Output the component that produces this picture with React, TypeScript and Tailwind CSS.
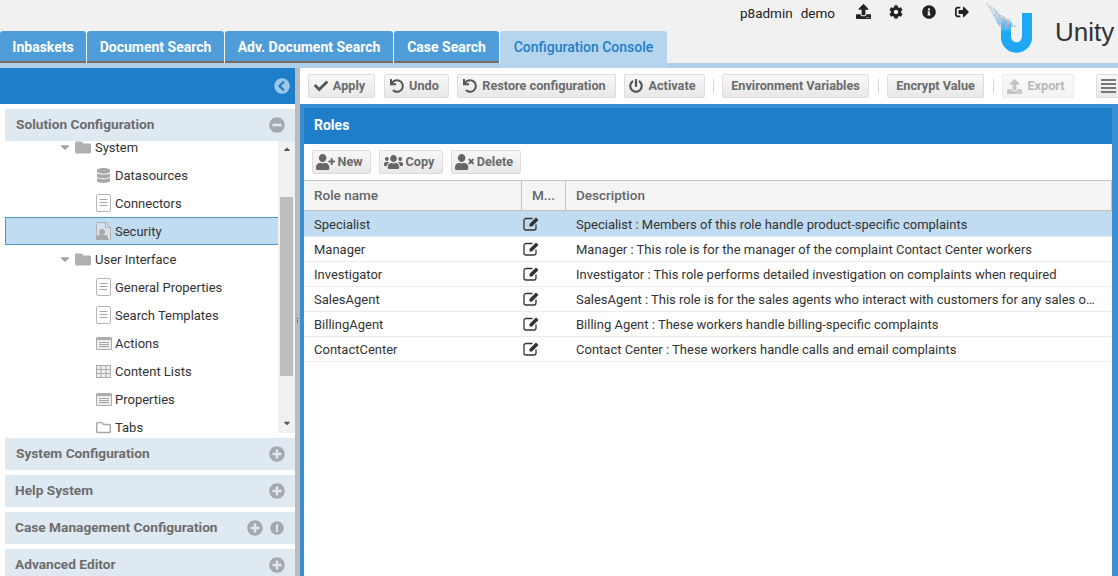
import React from "react";
import { FaCheck, FaUndo, FaPowerOff, FaUpload, FaCog, FaInfoCircle, FaSignOutAlt, FaUserPlus, FaUsers, FaUserTimes, FaChevronCircleLeft, FaPlusCircle, FaMinusCircle, FaExclamationCircle, FaFolder, FaRegFolder, FaDatabase, FaCaretDown, FaCaretUp } from "react-icons/fa";

const Tab = ({ label, w, active }: { label: string; w: string; active?: boolean }) => (
  <div className={active
    ? `${w} h-[37px] bg-[#b5d5ee] text-[#1f7ec9] text-[14px] font-medium flex items-start pt-[6px] justify-center rounded-t-[3px]`
    : `${w} h-[32px] bg-[#4f9dd8] text-white text-[14px] font-bold flex items-start pt-[6px] justify-center border-b-2 border-[#7a6a62] rounded-t-[3px]`}>
    {label}
  </div>
);

const DocIcon = () => (
  <svg width="15" height="18" viewBox="0 0 15 18">
    <rect x="0.5" y="0.5" width="14" height="17" rx="1.5" fill="#fff" stroke="#b5b5b5" />
    <path d="M3.500 5.500h8M3.500 8.500h8M3.500 11.500h8" stroke="#a8a8a8" fill="none" />
  </svg>
);
const SecIcon = () => (
  <svg width="15" height="18" viewBox="0 0 15 18">
    <path d="M.5 1.500a1 1 0 0 1 1-1h8l5 5v11a1 1 0 0 1-1 1h-12a1 1 0 0 1-1-1z" fill="#d6e3ee" stroke="#b0b0b0" />
    <path d="M9.500.5v5h5" fill="none" stroke="#b0b0b0" />
    <circle cx="6" cy="10" r="3" fill="#a8a8a8" />
    <path d="M0 18v-3a2.500 2.500 0 0 1 2.500-2h7a2.500 2.500 0 0 1 2.500 2v3z" fill="#a8a8a8" />
  </svg>
);
const ListIcon = () => (
  <svg width="16" height="13" viewBox="0 0 16 13">
    <rect width="16" height="13" rx="1.500" fill="#ababab" />
    <rect x="1" y="3" width="14" height="9" fill="#eee" />
    <path d="M3 5.500h10M3 7.500h10M3 9.500h10" stroke="#a8a8a8" />
  </svg>
);
const GridIcon = () => (
  <svg width="15" height="13" viewBox="0 0 15 13">
    <rect x=".5" y=".5" width="14" height="12" fill="#eee" stroke="#ababab" />
    <path d="M0 4.500h15M0 8.500h15M5 0v13M10 0v13" stroke="#ababab" fill="none" />
  </svg>
);
const EditIcon = () => (
  <svg width="17" height="15" viewBox="0 0 17 15" className="block">
    <path d="M9.500 2.500H3A2 2 0 0 0 1 4.500V12a2 2 0 0 0 2 2h8a2 2 0 0 0 2-2V8.500" fill="none" stroke="#333" strokeWidth="1.300" />
    <path d="M6.500 8L13 1.500 15.500 4 9 10.500H6.500z" fill="#333" />
  </svg>
);
const MenuIcon = () => (
  <svg width="15" height="14" viewBox="0 0 15 14" className="block">
    <path d="M0 1h15M0 5h15M0 9h15M0 13h15" stroke="#777" strokeWidth="2" />
  </svg>
);

const TreeRow = ({ label, icon, caret, selected, first }: { label: string; icon: React.ReactNode; caret?: boolean; selected?: boolean; first?: boolean }) => (
  <div className={`h-[28px] flex items-center text-[13px] text-[#333] ${first ? "-mt-[8px]" : ""} ${selected ? "bg-[#c1dcf0] border border-[#4b94cc] border-r-0" : ""}`}>
    {caret ? (
      <div className="flex items-center">
        <FaCaretDown className="ml-[53px] mr-[3px] text-[#a3a3a3] text-[14px]" />
        <FaFolder className="text-[#b0b0b0] text-[17px] mr-[4px] w-[16px]" />
      </div>
    ) : (
      <div className={`flex items-center justify-center w-[17px] ${selected ? "ml-[89px]" : "ml-[90px]"} mr-[2px]`}>{icon}</div>
    )}
    <span className={`pt-[2px] ${caret ? "" : "ml-[1px]"}`}>{label}</span>
  </div>
);

const Section = ({ label, minus, warn, mt = "mt-[5px]", pl = "pl-[11px]" }: { label: string; minus?: boolean; warn?: boolean; mt?: string; pl?: string }) => (
  <div className={`h-[32px] ${mt} ${pl} ml-[5px] shrink-0 bg-[#dfe9f2] flex items-center pr-[10px] text-[13.7px] font-bold text-[#6d6d6d]`}>
    <span className="flex-1 pb-[2px]">{label}</span>
    {warn ? (
      <>
        <FaPlusCircle className="text-[#a5a9ad] text-[16px] mr-[7px]" />
        <FaExclamationCircle className="text-[#a5a9ad] text-[14px] mr-[1px]" />
      </>
    ) : minus ? (
      <FaMinusCircle className="text-[#a5a9ad] text-[16px]" />
    ) : (
      <FaPlusCircle className="text-[#a5a9ad] text-[16px]" />
    )}
  </div>
);

const Btn = ({ label, icon, w, disabled, ml = "ml-[8px]", gap = "gap-[5px]" }: { label: string; icon?: React.ReactNode; w: string; disabled?: boolean; ml?: string; gap?: string }) => (
  <div className={`${w} ${ml} ${gap} ${icon ? "pr-[4px]" : ""} h-[24px] shrink-0 flex items-center justify-center rounded-[2px] border text-[12.7px] font-bold bg-gradient-to-b ${disabled ? "from-[#fafafa] to-[#f3f3f3] border-[#eaeaea] text-[#b8b8b8]" : "from-[#f8f8f8] to-[#e8e8e8] border-[#dddddd] text-[#6b6b6b]"}`}>
    {icon}
    <span>{label}</span>
  </div>
);

const Sep = ({ ml = "ml-[8px]" }: { ml?: string }) => <div className={`w-px h-[14px] shrink-0 bg-[#d8d8d8] ${ml}`} />;

const rows = [
  ["Specialist", "Specialist : Members of this role handle product-specific complaints"],
  ["Manager", "Manager : This role is for the manager of the complaint Contact Center workers"],
  ["Investigator", "Investigator : This role performs detailed investigation on complaints when required"],
  ["SalesAgent", "SalesAgent : This role is for the sales agents who interact with customers for any sales or service related complaints"],
  ["BillingAgent", "Billing Agent : These workers handle billing-specific complaints"],
  ["ContactCenter", "Contact Center : These workers handle calls and email complaints"],
];

const palette = ["#58a8e8", "#e09a90", "#3fa4ee", "#8fb4d4", "#2f9ff0", "#b9a8b0", "#68b0e4"];
const dots: { x: number; y: number; c: string; o: number }[] = [];
for (let y = 3, i = 0; y < 26; y += 1.5) {
  const cx = 2 + (y - 3) * 0.88;
  const hw = 0.5 + (y - 3) * 0.3;
  for (let x = cx - hw; x <= cx + hw; x += 1.8, i++) {
    if ((i * 5) % 7 === 3 && y < 15) continue;
    dots.push({ x, y, c: palette[(i * 3) % 7], o: 0.35 + (y / 26) * 0.5 });
  }
}

const Logo = () => (
  <svg width="50" height="54" viewBox="0 0 50 54" className="block shrink-0">
    <defs>
      <linearGradient id="ufade" gradientUnits="userSpaceOnUse" x1="0" y1="18" x2="0" y2="32">
        <stop offset="0" stopColor="#1fa9f4" stopOpacity="0.1" />
        <stop offset="1" stopColor="#1fa9f4" />
      </linearGradient>
    </defs>
    <path d="M16 18V37a15.500 15.500 0 0 0 31 0V13H37V37a5.500 5.500 0 0 1-11 0V18z" fill="url(#ufade)" />
    <path d="M37 13h10v24a15.500 15.500 0 0 1-31 0V32h10v5a5.500 5.500 0 0 0 11 0z" fill="#1fa9f4" />
    {dots.map((d, i) => <rect key={i} x={d.x} y={d.y} width="1.400" height="1.400" fill={d.c} opacity={d.o} />)}
  </svg>
);

const userIcon = "w-[19px] h-[16px] text-[#666]";

export default function App() {
  return (
    <div className="w-[1118px] h-[576px] overflow-hidden flex flex-col bg-white font-['Roboto','Liberation_Sans',sans-serif]">
      {/* Header */}
      <header className="h-[68px] shrink-0 bg-[#f1f1f1] relative flex justify-between">
        <div className="absolute left-0 right-0 bottom-0 h-[5px] bg-[#acd0ec]" />
        <nav className="relative flex gap-[1px] items-start self-end h-[37px]">
          <Tab label="Inbaskets" w="w-[86px]" />
          <Tab label="Document Search" w="w-[137px]" />
          <Tab label="Adv. Document Search" w="w-[168px]" />
          <Tab label="Case Search" w="w-[105px]" />
          <Tab label="Configuration Console" w="w-[167px]" active />
        </nav>
        <div className="relative flex items-start pr-[3px]">
          <div className="flex items-center text-[13.5px] text-[#222] h-[26px] mr-[16px]">
            <span>p8admin</span>
            <span className="ml-[8px] mr-[21px]">demo</span>
            <FaUpload className="text-[15px] text-[#222] mb-[4px]" />
            <FaCog className="text-[14px] text-[#222] ml-[18px] mb-[3px]" />
            <FaInfoCircle className="text-[14px] text-[#222] ml-[19px] mb-[3px]" />
            <FaSignOutAlt className="text-[14px] text-[#222] ml-[19px] mb-[3px]" />
          </div>
          <Logo />
          <span className="w-[60px] text-[26px] text-[#333] mt-[14px] ml-[20px] leading-[36px] font-['Liberation_Sans',sans-serif]">Unity</span>
        </div>
      </header>

      {/* Body */}
      <div className="flex-1 flex min-h-0">
        {/* Left */}
        <aside className="w-[295px] shrink-0 flex flex-col bg-white overflow-hidden">
          <div className="h-[36px] shrink-0 bg-[#1f7ec9] flex items-center justify-end pr-[5px]">
            <FaChevronCircleLeft className="text-[#9cc6ea] text-[16px]" />
          </div>
          <Section label="Solution Configuration" minus />
          <div className="h-[297px] shrink-0 flex overflow-hidden">
            <div className="w-[278px] pl-[5px] overflow-hidden">
              <TreeRow first label="System" caret icon={null} />
              <TreeRow label="Datasources" icon={<FaDatabase className="text-[#a8a8a8] text-[15px]" />} />
              <TreeRow label="Connectors" icon={<DocIcon />} />
              <TreeRow label="Security" selected icon={<SecIcon />} />
              <TreeRow label="User Interface" caret icon={null} />
              <TreeRow label="General Properties" icon={<DocIcon />} />
              <TreeRow label="Search Templates" icon={<DocIcon />} />
              <TreeRow label="Actions" icon={<ListIcon />} />
              <TreeRow label="Content Lists" icon={<GridIcon />} />
              <TreeRow label="Properties" icon={<ListIcon />} />
              <TreeRow label="Tabs" icon={<FaRegFolder className="text-[#a8a8a8] text-[15px]" />} />
            </div>
            <div className="w-[17px] h-[292px] bg-[#f1f1f1] flex flex-col items-center">
              <FaCaretUp className="text-[#555] text-[10px] mt-[3px] h-[10px]" />
              <div className="w-[13px] h-[179px] bg-[#bdbdbd] mt-[43px] ml-[-1px]" />
              <FaCaretDown className="text-[#555] text-[10px] mt-[42px] h-[10px]" />
            </div>
          </div>
          <Section label="System Configuration" mt="mt-0" />
          <Section label="Help System" pl="pl-[10px]" />
          <Section label="Case Management Configuration" warn pl="pl-[10px]" />
          <Section label="Advanced Editor" pl="pl-[10px]" />
        </aside>

        {/* Splitter */}
        <div className="w-[5px] shrink-0 bg-[#bbbbbb] flex items-center justify-center">
          <div className="flex flex-col gap-[1px] mb-[4px]">
            <i className="block w-px h-px bg-[#555]" />
            <i className="block w-px h-px bg-[#555]" />
            <i className="block w-px h-px bg-[#555]" />
          </div>
        </div>

        {/* Right */}
        <main className="flex-1 flex flex-col min-w-0">
          <div className="h-[36px] shrink-0 flex items-center overflow-hidden">
            <Btn w="w-[67px]" label="Apply" icon={<FaCheck className="text-[14px] text-[#555]" />} />
            <Btn ml="ml-[9px]" w="w-[65px]" label="Undo" icon={<FaUndo className="text-[14px] text-[#555]" />} />
            <Btn w="w-[159px]" label="Restore configuration" icon={<FaUndo className="text-[14px] text-[#555]" />} />
            <Btn w="w-[81px]" label="Activate" icon={<FaPowerOff className="text-[14px] text-[#555]" />} />
            <Sep />
            <Btn w="w-[147px]" label="Environment Variables" />
            <Sep ml="ml-[9px]" />
            <Btn w="w-[97px]" label="Encrypt Value" />
            <Sep ml="ml-[9px]" />
            <Btn w="w-[72px]" label="Export" disabled icon={<FaUpload className="text-[15px] text-[#c4c4c4]" />} />
            <div className="ml-[22px] w-[30px] h-[24px] shrink-0 rounded-[2px] border border-[#dddddd] bg-gradient-to-b from-[#f8f8f8] to-[#e8e8e8] flex items-center pl-[4px]">
              <MenuIcon />
            </div>
          </div>

          <section className="flex-1 flex flex-col min-h-0 border-l-[4px] border-t-[4px] border-r-[6px] border-[#3a8fd4]">
            <div className="h-[36px] shrink-0 bg-[#1f7ec9] text-white text-[14px] font-bold flex items-center pl-[10px] pb-[2px]">Roles</div>
            <div className="h-[36px] shrink-0 flex items-center pl-[8px]">
              <Btn ml="ml-0" gap="gap-[2px]" w="w-[59px]" label="New" icon={<FaUserPlus preserveAspectRatio="none" className={userIcon} />} />
              <Btn gap="gap-[3px]" w="w-[64px]" label="Copy" icon={<FaUsers preserveAspectRatio="none" className={userIcon} />} />
              <Btn gap="gap-[3px]" w="w-[70px]" label="Delete" icon={<FaUserTimes preserveAspectRatio="none" className={userIcon} />} />
            </div>
            <div className="grid grid-cols-[218px_44px_1fr] h-[31px] shrink-0 bg-[#f4f4f4] border border-[#c4c4c4] border-l-0 text-[13.5px] font-medium text-[#666]">
              <div className="pl-[10px] flex items-center border-r border-[#c4c4c4]">Role name</div>
              <div className="pl-[10px] flex items-center border-r border-[#c4c4c4]">M...</div>
              <div className="pl-[10px] flex items-center">Description</div>
            </div>
            {rows.map(([name, desc], i) => (
              <div key={name} className={`grid grid-cols-[218px_44px_1fr] shrink-0 text-[13px] text-[#333] border-b border-[#ececec] ${i === 0 ? "h-[26px] bg-[#c1dcf0] pt-[2px]" : "h-[25px] pt-[1px]"}`}>
                <div className="pl-[10px] flex items-center">{name}</div>
                <div className={`flex items-center pl-[1px] ${i === 0 ? "pb-[3px]" : "pb-[2px]"}`}><EditIcon /></div>
                <div className="pl-[10px] flex items-center min-w-0 pr-[13px]"><span className="truncate">{desc}</span></div>
              </div>
            ))}
          </section>
        </main>
      </div>
    </div>
  );
}
